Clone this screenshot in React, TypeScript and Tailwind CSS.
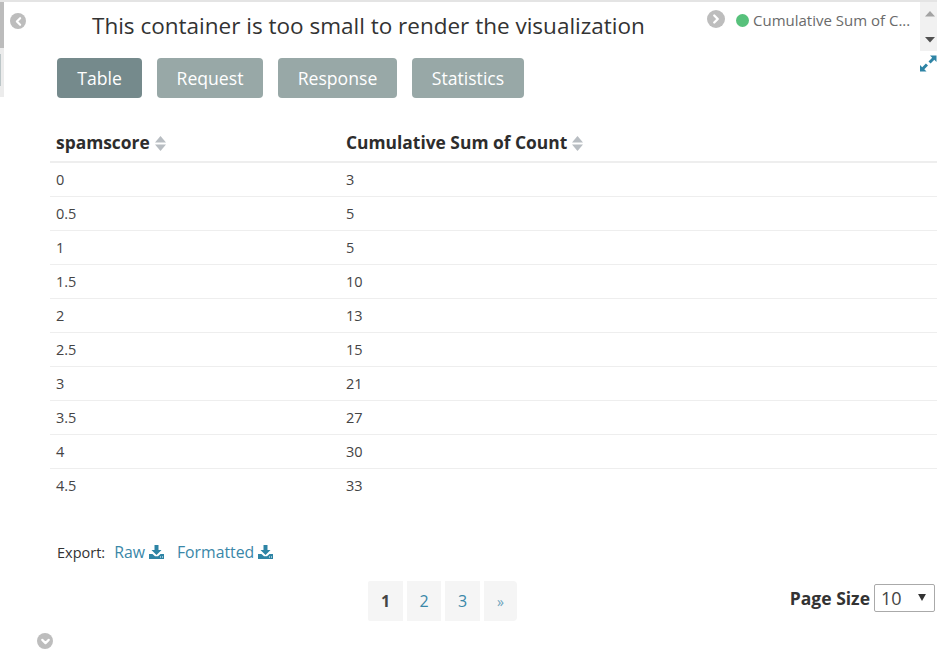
import React from 'react';
import { ChevronLeft, ChevronRight, ChevronDown } from 'lucide-react';

const rows = [
  ['0', '3'],
  ['0.5', '5'],
  ['1', '5'],
  ['1.5', '10'],
  ['2', '13'],
  ['2.5', '15'],
  ['3', '21'],
  ['3.5', '27'],
  ['4', '30'],
  ['4.5', '33'],
];

const tabs = ['Table', 'Request', 'Response', 'Statistics'];

const SortIcon = () => (
  <svg width="11" height="15" viewBox="0 0 11 15" className="inline-block ml-[5px] align-[-2px]">
    <path d="M5.5 0 L11 6.5 H0 Z" fill="#b8bdc2" />
    <path d="M0 8.5 H11 L5.5 15 Z" fill="#b8bdc2" />
  </svg>
);

const DownloadIcon = () => (
  <svg width="15" height="14" viewBox="0 0 15 14" className="inline-block ml-[4px] align-[-1px]">
    <path d="M5.5 0 H9.5 V5 H12.5 L7.5 10 L2.5 5 H5.5 Z" fill="#2e84a5" />
    <path d="M0 9 H3.5 L6 11.2 H9 L11.5 9 H15 V14 H0 Z" fill="#2e84a5" />
    <rect x="11" y="11.5" width="1" height="1" fill="#fff" />
    <rect x="13" y="11.5" width="1" height="1" fill="#fff" />
  </svg>
);

const RoundButton = ({ children, className }: { children: React.ReactNode; className: string }) => (
  <span className={`absolute flex items-center justify-center rounded-full bg-[#bdbdbd] text-white ${className}`}>
    {children}
  </span>
);

export default function App() {
  return (
    <div className="relative w-[937px] h-[650px] overflow-hidden bg-white font-['Open_Sans',sans-serif] text-[#333]">
      {/* top edge and clipped left panel */}
      <div className="absolute left-0 top-0 w-full h-[2px] bg-[#e4e4e4]" />
      <div className="absolute left-0 top-[2px] w-[4px] h-[95px] bg-[#ececec]">
        <div className="w-[4px] h-[46px] bg-[#bcbcbc]" />
        <div className="mt-[6px] w-[1px] h-[32px] bg-[#bcc6c8]" />
      </div>

      <RoundButton className="left-[10px] top-[13px] w-4 h-4">
        <ChevronLeft size={13} strokeWidth={4} />
      </RoundButton>
      <RoundButton className="left-[707px] top-[10px] w-[18px] h-[18px]">
        <ChevronRight size={14} strokeWidth={4} />
      </RoundButton>
      <RoundButton className="left-[37px] top-[633px] w-4 h-4">
        <ChevronDown size={13} strokeWidth={4} />
      </RoundButton>

      {/* legend */}
      <div className="absolute left-[736px] top-[10px] flex items-center text-[15px] leading-[20px] text-[#6a6a6a]">
        <span className="w-[13px] h-[13px] rounded-full bg-[#57c17b] mr-[4px]" />
        Cumulative Sum of C...
      </div>

      {/* legend scroll */}
      <div className="absolute left-[920px] top-[2px] w-[17px] h-[49px] bg-[#f1f1f1]">
        <svg width="17" height="49" viewBox="0 0 17 49">
          <path d="M10 9 L15 14.5 H5 Z" fill="#a3a3a3" />
          <path d="M5 35 H15 L10 40.5 Z" fill="#505050" />
        </svg>
      </div>

      {/* expand */}
      <svg width="17" height="17" viewBox="0 0 17 17" className="absolute left-[920px] top-[55px]">
        <path d="M16.5 0.5 H10 L12.2 2.7 L8.5 6.4 L10.6 8.5 L14.3 4.8 L16.5 7 Z" fill="#2e84a5" />
        <path d="M0 16.5 H6.5 L4.3 14.3 L8 10.6 L5.9 8.5 L2.2 12.2 L0 10 Z" fill="#2e84a5" />
      </svg>

      <div className="pl-[50px]">
        <h2 className="pl-[42px] pt-[10px] h-[58px] text-[22.5px] leading-[31px] text-[#333]">
          This container is too small to render the visualization
        </h2>

        <div className="flex gap-[15px] pl-[7px] h-[40px]">
          {tabs.map((tab, i) => (
            <button
              key={tab}
              className={`h-[40px] rounded-[4px] text-white text-[17.6px] ${i === 0 ? 'w-[85px] bg-[#758a8c]' : ''} ${i === 1 ? 'w-[106px] bg-[#98a8a7]' : ''} ${i === 2 ? 'w-[119px] bg-[#98a8a7]' : ''} ${i === 3 ? 'w-[112px] bg-[#98a8a7]' : ''}`}
            >
              {tab}
            </button>
          ))}
        </div>

        <table className="w-[887px] mt-[25px] table-fixed border-collapse text-[14.5px] text-[#444]">
          <thead>
            <tr className="h-[39px] border-b-2 border-[#eeeeee] text-[#2d2d2d]">
              <th className="w-[296px] pl-[6px] text-left font-bold text-[17.4px]">
                spamscore
                <SortIcon />
              </th>
              <th className="text-left font-bold text-[17.4px]">
                Cumulative Sum of Count
                <SortIcon />
              </th>
            </tr>
          </thead>
          <tbody>
            {rows.map(([score, count], i) => (
              <tr key={score} className={`h-[34px] ${i < rows.length - 1 ? 'border-b border-[#eeeeee]' : ''}`}>
                <td className="pl-[6px] pt-[2px]">{score}</td>
                <td className="pt-[2px]">{count}</td>
              </tr>
            ))}
          </tbody>
        </table>

        <div className="mt-[38px] pl-[7px] h-[24px] flex items-center text-[14.5px] leading-[19px]">
          <span className="mr-[9px]">Export:</span>
          <a className="text-[#3a87a8] text-[15.8px] mr-[13px]">
            Raw
            <DownloadIcon />
          </a>
          <a className="text-[#3a87a8] text-[15.8px]">
            Formatted
            <DownloadIcon />
          </a>
        </div>

        <div className="relative mt-[17px] h-[40px]">
          <div className="flex justify-center gap-[4px] w-[785px]">
            <span className="w-[35px] h-[40px] flex items-center justify-center bg-[#f5f5f5] rounded-l-[2px] font-bold text-[16px] text-[#444]">1</span>
            <span className="w-[34px] h-[40px] flex items-center justify-center bg-[#f5f5f5] text-[#3a87a8] text-[16px]">2</span>
            <span className="w-[35px] h-[40px] flex items-center justify-center bg-[#f5f5f5] text-[#3a87a8] text-[16px]">3</span>
            <span className="w-[33px] h-[40px] flex items-center justify-center bg-[#f5f5f5] rounded-r-[4px] text-[#6ea3bc] text-[14px]">»</span>
          </div>
          <div className="absolute right-[2px] top-[3px] flex items-center gap-[4px]">
            <span className="font-bold text-[17.5px] text-[#333]">Page Size</span>
            <div className="relative w-[61px] h-[28px] border border-[#aaa] rounded-[2px] pl-[6px] text-[18px] leading-[26px] text-[#444]">
              10
              <svg width="8" height="7" viewBox="0 0 9 8" className="absolute right-[8px] top-[9px]">
                <path d="M0 0 H9 L4.5 8 Z" fill="#333" />
              </svg>
            </div>
          </div>
        </div>
      </div>
    </div>
  );
}
